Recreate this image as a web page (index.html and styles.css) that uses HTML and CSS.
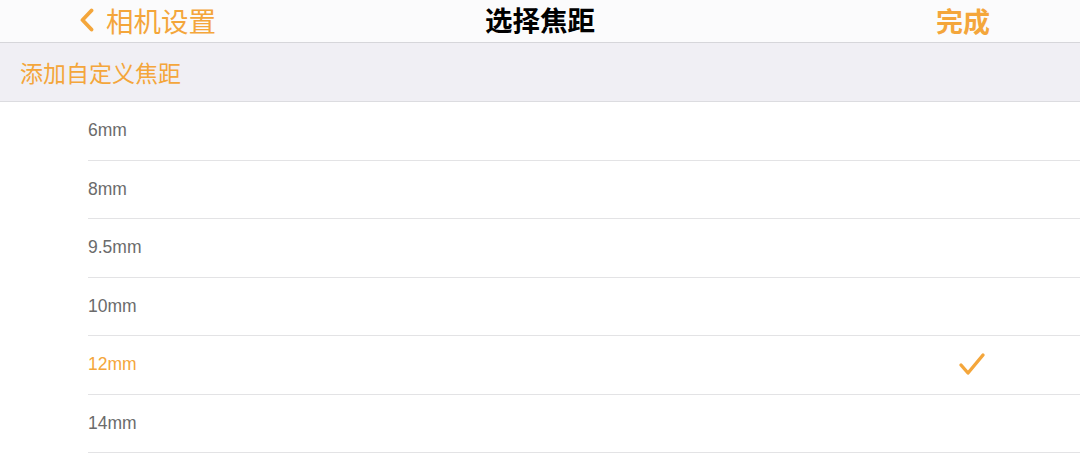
FILE: index.html
```html
<!DOCTYPE html>
<html>
<head>
<meta charset="UTF-8">
<title>选择焦距</title>
<link rel="stylesheet" href="styles.css">
</head>
<body>

	<!-- 상단 네비게이션 -->
	<div class="navbar">
		<a class="nav-back" href="#">
			<svg class="chevron" width="16" height="24" viewBox="0 0 16 24">
				<path d="M12.5 2.5 L3.5 12 L12.5 21.5" fill="none" stroke="#f4a63b" stroke-width="3.8" stroke-linecap="round" stroke-linejoin="round"/>
			</svg>
			<span>相机设置</span>
		</a>
		<div class="nav-title">选择焦距</div>
		<a class="nav-done" href="#">完成</a>
	</div>

	<div class="section-head">添加自定义焦距</div>

	<ul class="list">
		<li class="row">6mm</li>
		<li class="row">8mm</li>
		<li class="row">9.5mm</li>
		<li class="row">10mm</li>
		<li class="row selected">12mm
			<svg class="check" width="30" height="28" viewBox="0 0 30 28">
				<path d="M3 14 L10 22 L25 4" fill="none" stroke="#f4a63b" stroke-width="3.4" stroke-linecap="round" stroke-linejoin="round"/>
			</svg>
		</li>
		<li class="row">14mm</li>
	</ul>

</body>
</html>
```

FILE: styles.css
```css
body {
	margin: 0;
	background: #fff;
	font-family: "Liberation Sans", "Noto Sans CJK SC", sans-serif;
	overflow: hidden
}

a {
	text-decoration: none
}

.navbar {
	display: grid;
	grid-template-columns: 1fr auto 1fr;
	align-items: center;
	height: 42px;
	background: #fbfbfc;
	border-bottom: 1px solid #d6d6da;
	font-family: "Noto Sans CJK SC", sans-serif
}

.nav-back {
	display: flex;
	align-items: center;
	gap: 11px;
	padding-left: 79px;
	margin-top: -2px;
	color: #f4a63b;
	font-size: 27.5px
}

.nav-title {
	font-size: 27.5px;
	font-weight: bold;
	color: #000;
	margin-top: -5px
}

.nav-done {
	justify-self: end;
	padding-right: 90px;
	font-size: 27px;
	font-weight: bold;
	color: #f4a63b;
	margin-top: -2px
}

.section-head {
	height: 58px;
	display: flex;
	align-items: center;
	padding-left: 20px;
	background: #f0eff4;
	border-bottom: 1px solid #dcdce0;
	font-family: "Noto Sans CJK SC", sans-serif;
	font-size: 23px;
	color: #f4a63b
}

.list {
	list-style: none;
	margin: 0;
	padding: 0 0 0 88px
}

.row {
	box-sizing: border-box;
	height: 58.5px;
	display: flex;
	align-items: center;
	justify-content: space-between;
	border-bottom: 1px solid #e3e3e5;
	font-size: 17.5px;
	color: #6b6b6b
}

.row.selected {
	color: #f4a63b
}

.check {
	margin-right: 92px
}
```
